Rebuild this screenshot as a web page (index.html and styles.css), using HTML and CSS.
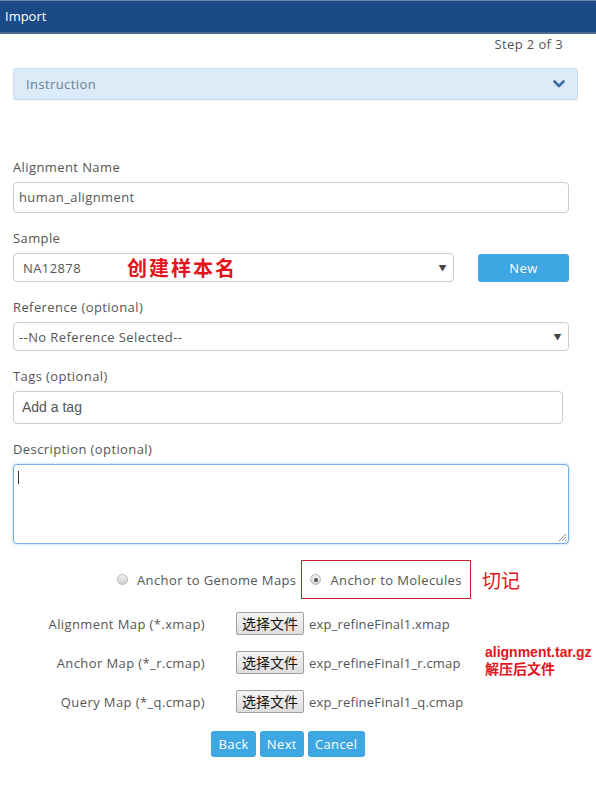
FILE: index.html
```html
<!DOCTYPE html>
<html lang="en">
<head>
    <meta charset="utf-8">
    <title>Import</title>
    <link rel="stylesheet" href="styles.css">
</head>
<body>
    <header class="topbar">Import</header>

    <div class="step">Step 2 of 3</div>

    <div class="panel">
        <span>Instruction</span>
        <svg class="chevron" width="12" height="8" viewBox="0 0 12 8">
            <path d="M1.5 1.5 L6 6 L10.5 1.5" fill="none" stroke="#3d6d9e" stroke-width="2.6" stroke-linecap="round" stroke-linejoin="round"/>
        </svg>
    </div>

    <form class="form">
        <div class="group">
            <label class="label">Alignment Name</label>
            <div class="input">human_alignment</div>
        </div>

        <div class="group">
            <label class="label">Sample</label>
            <div class="row">
                <div class="select sample">
                    <span>NA12878</span>
                    <span class="arrow">&#9660;</span>
                    <span class="note note-sample">创建样本名</span>
                </div>
                <button type="button" class="btn btn-new">New</button>
            </div>
        </div>

        <div class="group">
            <label class="label">Reference (optional)</label>
            <div class="select">
                <span class="ref">--No Reference Selected--</span>
                <span class="arrow">&#9660;</span>
            </div>
        </div>

        <div class="group">
            <label class="label">Tags (optional)</label>
            <div class="input tags">Add a tag</div>
        </div>

        <div class="group">
            <label class="label">Description (optional)</label>
            <div class="textarea">
                <span class="caret"></span>
                <svg class="grip" width="9" height="9" viewBox="0 0 9 9">
                    <path d="M1 8 L8 1 M4 8 L8 4 M7 8 L8 7" stroke="#888" stroke-width="1"/>
                </svg>
            </div>
        </div>

        <div class="anchors">
            <span class="radio-opt"><span class="radio"></span>Anchor to Genome Maps</span>
            <span class="radio-opt boxed"><span class="radio checked"></span>Anchor to Molecules</span>
            <span class="note note-remember">切记</span>
        </div>

        <div class="files">
            <div class="file-row">
                <span class="file-label">Alignment Map (*.xmap)</span>
                <span class="file-btn">选择文件</span>
                <span class="file-name">exp_refineFinal1.xmap</span>
            </div>
            <div class="file-row">
                <span class="file-label">Anchor Map (*_r.cmap)</span>
                <span class="file-btn">选择文件</span>
                <span class="file-name">exp_refineFinal1_r.cmap</span>
            </div>
            <div class="file-row">
                <span class="file-label">Query Map (*_q.cmap)</span>
                <span class="file-btn">选择文件</span>
                <span class="file-name">exp_refineFinal1_q.cmap</span>
            </div>
            <div class="note note-files">alignment.tar.gz<br>解压后文件</div>
        </div>

        <div class="actions">
            <button type="button" class="btn">Back</button>
            <button type="button" class="btn">Next</button>
            <button type="button" class="btn">Cancel</button>
        </div>
    </form>
</body>
</html>
```

FILE: styles.css
```css
body {
    margin: 0;
    font-family: "Open Sans", "Noto Sans CJK SC", sans-serif;
    font-size: 13px;
    letter-spacing: 0.4px;
    color: #555;
    background: #fff;
    width: 596px;
}

.topbar {
    box-sizing: border-box;
    height: 34px;
    line-height: 31px;
    padding-left: 5px;
    background: #1c4a87;
    border-top: 1px solid #6d88ad;
    border-bottom: 2px solid #4a6a92;
    color: #fff;
    font-size: 13px;
    letter-spacing: 0;
}

.step {
    text-align: right;
    padding-right: 33px;
    height: 22px;
    line-height: 22px;
    margin-top: -1px;
}

.panel {
    margin: 13px 18px 0 13px;
    height: 32px;
    box-sizing: border-box;
    background: #dbebf8;
    border: 1px solid #c9dff1;
    border-radius: 3px;
    box-shadow: 0 1px 1px rgba(0, 0, 0, 0.06);
    display: flex;
    align-items: center;
    justify-content: space-between;
    padding: 0 12px 0 12px;
    color: #6b7f93;
}

.form {
    margin: 58px 27px 0 13px;
}

.group {
    margin-bottom: 16px;
}

.label {
    display: block;
    line-height: 18px;
    margin-bottom: 6px;
}

.input,
.select,
.textarea {
    box-sizing: border-box;
    border: 1px solid #ccc;
    border-radius: 4px;
    background: #fff;
}

.input {
    height: 31px;
    line-height: 29px;
    padding-left: 5px;
}

.input.tags {
    height: 33px;
    line-height: 31px;
    margin-right: 6px;
    padding-left: 8px;
    font-family: "Liberation Sans", Arial, sans-serif;
    font-size: 14px;
    letter-spacing: 0;
}

.select {
    height: 29px;
    display: flex;
    align-items: center;
    justify-content: space-between;
    padding: 0 6px 0 5px;
    position: relative;
}

.arrow {
    font-size: 8px;
    color: #444;
}

.row {
    display: flex;
    align-items: center;
}

.sample {
    width: 441px;
    padding-left: 9px;
}

.btn {
    border: 0;
    border-radius: 3px;
    background: #3ea6e2;
    color: #fff;
    font-family: "Open Sans", sans-serif;
    font-size: 13px;
    letter-spacing: 0.4px;
    padding: 0;
    height: 26px;
}

.btn-new {
    margin-left: 24px;
    width: 91px;
    height: 28px;
}

.note {
    color: #e3141c;
    font-family: "Noto Sans CJK SC", sans-serif;
    letter-spacing: 0;
}

.note-sample {
    position: absolute;
    left: 113px;
    top: 1px;
    font-size: 20px;
    font-weight: bold;
    letter-spacing: 2px;
    line-height: 26px;
}

.textarea {
    height: 80px;
    border-color: #78aee3;
    box-shadow: 0 0 3px rgba(102, 175, 233, 0.6);
    position: relative;
}

.caret {
    position: absolute;
    left: 4px;
    top: 6px;
    width: 1px;
    height: 13px;
    background: #333;
}

.grip {
    position: absolute;
    right: 1px;
    bottom: 1px;
}

.anchors {
    display: flex;
    align-items: center;
    height: 39px;
    margin-top: 1px;
    padding-left: 104px;
}

.radio-opt {
    display: flex;
    align-items: center;
    height: 100%;
}

.radio-opt.boxed {
    box-sizing: border-box;
    border: 1px solid #c8232c;
    margin-left: 5px;
    padding: 0 8px 0 8px;
    height: 39px;
}

.radio {
    width: 11px;
    height: 11px;
    border-radius: 50%;
    border: 1px solid #b5b5b5;
    background: linear-gradient(#f2f2f2, #d2d2d2);
    margin-right: 9px;
    box-sizing: border-box;
    position: relative;
}

.radio.checked::after {
    content: "";
    position: absolute;
    left: 2.5px;
    top: 2.5px;
    width: 4px;
    height: 4px;
    border-radius: 50%;
    background: #555;
}

.note-remember {
    font-size: 19px;
    margin-left: 11px;
}

.files {
    margin-top: 5px;
    position: relative;
}

.file-row {
    display: flex;
    align-items: center;
    height: 39px;
}

.file-label {
    width: 192px;
    text-align: right;
    margin-right: 31px;
}

.file-btn {
    box-sizing: border-box;
    width: 68px;
    height: 23px;
    line-height: 21px;
    text-align: center;
    border: 1px solid #a0a0a0;
    border-radius: 2px;
    background: linear-gradient(#f4f4f4, #dedede);
    color: #111;
    font-family: "Noto Sans CJK SC", sans-serif;
    font-size: 14px;
    letter-spacing: 0;
    margin-right: 5px;
}

.file-name {
    letter-spacing: 0.2px;
}

.note-files {
    position: absolute;
    left: 472px;
    top: 40px;
    font-family: "Liberation Sans", "Noto Sans CJK SC", sans-serif;
    font-weight: bold;
    font-size: 14px;
    line-height: 17px;
}

.actions {
    display: flex;
    justify-content: center;
    gap: 4px;
    margin-top: 10px;
    padding-right: 6px;
}

.actions .btn {
    padding: 0 7px;
}
```
